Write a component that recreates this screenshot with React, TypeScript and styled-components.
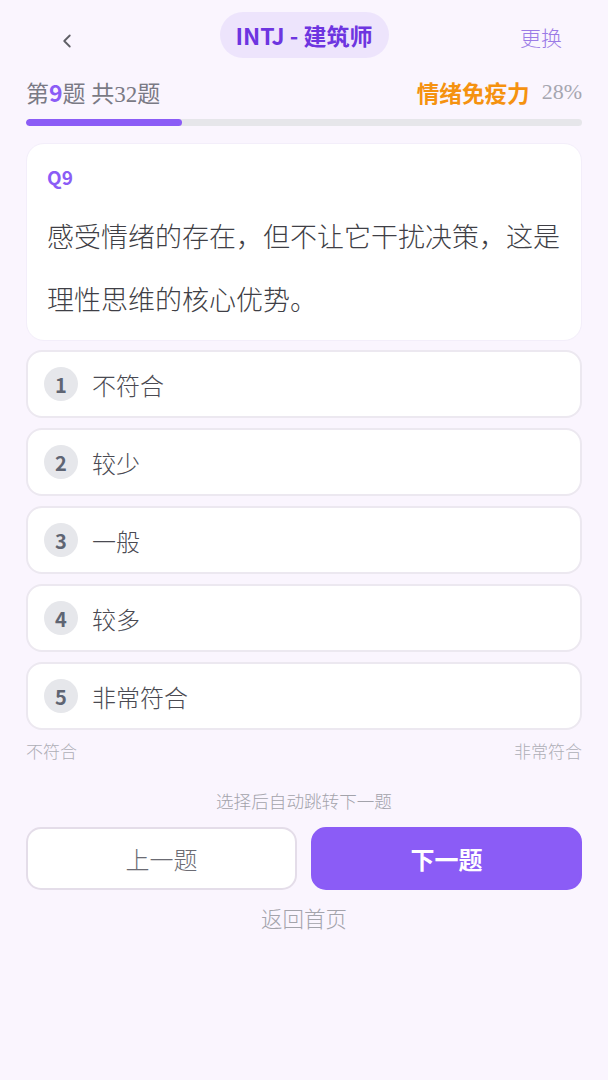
import React from 'react';
import styled, { createGlobalStyle } from 'styled-components';

const GlobalStyle = createGlobalStyle`
    html, body {
        margin: 0;
        padding: 0;
        background: #faf5fe;
    }
    body {
        font-family: 'Liberation Serif', 'Noto Sans CJK SC', serif;
    }
`;

const Page = styled.div`
    width: 608px;
    min-height: 1080px;
    box-sizing: border-box;
    padding: 12px 26px 40px;
    background: #faf5fe;
    display: flex;
    flex-direction: column;
`;

const TopBar = styled.div`
    display: flex;
    align-items: center;
    justify-content: space-between;
    height: 46px;
`;

const BackButton = styled.button`
    width: 80px;
    height: 46px;
    padding: 12px 0 0 30px;
    border: none;
    background: none;
    display: flex;
    align-items: center;
    justify-content: flex-start;
    cursor: pointer;
`;

const TypePill = styled.div`
    height: 46px;
    padding: 0 16px;
    border-radius: 23px;
    background: #ede4fc;
    color: #6d35e0;
    font-family: 'Noto Sans CJK SC', sans-serif;
    font-weight: 700;
    font-size: 23px;
    display: flex;
    align-items: center;
`;

const SwitchLink = styled.div`
    width: 80px;
    text-align: right;
    padding-right: 20px;
    margin-top: 4px;
    box-sizing: border-box;
    color: #9b7be6;
    font-family: 'Noto Sans CJK SC', sans-serif;
    font-weight: 300;
    font-size: 21px;
`;

const MetaRow = styled.div`
    margin-top: 19px;
    display: flex;
    justify-content: space-between;
    align-items: center;
    height: 30px;
`;

const Count = styled.div`
    font-size: 23px;
    color: #7a7a85;
`;

const Current = styled.span`
    font-family: 'Noto Sans CJK SC', sans-serif;
    font-weight: 700;
    color: #8b5cf6;
`;

const Dimension = styled.div`
    display: flex;
    align-items: center;
    gap: 12px;
`;

const DimName = styled.span`
    font-family: 'Noto Sans CJK SC', sans-serif;
    font-weight: 700;
    font-size: 22.6px;
    color: #f59210;
`;

const Percent = styled.span`
    font-size: 22px;
    color: #a6a6b0;
`;

const Track = styled.div`
    margin-top: 12px;
    height: 7px;
    border-radius: 4px;
    background: #e6e6ea;
    overflow: hidden;
`;

const Fill = styled.div`
    height: 100%;
    border-radius: 4px;
    background: #8b5cf6;
`;

const QuestionCard = styled.div`
    margin-top: 17px;
    background: #fff;
    border: 1px solid #f3eefa;
    border-radius: 18px;
    padding: 21px 20px 10px;
`;

const QLabel = styled.div`
    font-family: 'Noto Sans CJK SC', sans-serif;
    font-weight: 700;
    font-size: 19px;
    line-height: 24px;
    color: #8b5cf6;
`;

const QText = styled.div`
    margin-top: 15px;
    font-family: 'Noto Sans CJK SC', sans-serif;
    font-weight: 300;
    font-size: 27px;
    line-height: 63px;
    color: #3f3f46;
`;

const Options = styled.div`
    margin-top: 9px;
    display: flex;
    flex-direction: column;
    gap: 10px;
`;

const Option = styled.button`
    height: 68px;
    box-sizing: border-box;
    background: #fff;
    border: 2px solid #ece8f0;
    border-radius: 16px;
    display: flex;
    align-items: center;
    gap: 14px;
    padding: 0 16px;
    cursor: pointer;
    text-align: left;
`;

const Badge = styled.span`
    width: 34px;
    height: 34px;
    border-radius: 50%;
    background: #e6e7eb;
    color: #5f6573;
    font-family: 'Noto Sans CJK SC', sans-serif;
    font-weight: 700;
    font-size: 20px;
    display: flex;
    align-items: center;
    justify-content: center;
`;

const OptionText = styled.span`
    font-family: 'Noto Sans CJK SC', sans-serif;
    font-weight: 300;
    font-size: 24px;
    color: #4a4a52;
`;

const ScaleRow = styled.div`
    margin-top: 8px;
    display: flex;
    justify-content: space-between;
    font-family: 'Noto Sans CJK SC', sans-serif;
    font-weight: 300;
    font-size: 17px;
    color: #aeaeb6;
`;

const Hint = styled.div`
    margin-top: 25px;
    text-align: center;
    font-family: 'Noto Sans CJK SC', sans-serif;
    font-weight: 300;
    font-size: 17.6px;
    color: #a3a3ab;
`;

const ButtonRow = styled.div`
    margin-top: 14px;
    display: grid;
    grid-template-columns: 1fr 1fr;
    gap: 14px;
`;

const NavButton = styled.button<{ $primary?: boolean }>`
    height: 63px;
    border-radius: 15px;
    border: 2px solid ${p => (p.$primary ? '#8b5cf6' : '#e4dde9')};
    background: ${p => (p.$primary ? '#8b5cf6' : '#fff')};
    color: ${p => (p.$primary ? '#fff' : '#6b6b73')};
    font-family: 'Noto Sans CJK SC', sans-serif;
    font-weight: ${p => (p.$primary ? 700 : 300)};
    font-size: 24px;
    cursor: pointer;
`;

const HomeLink = styled.div`
    margin-top: 12px;
    text-align: center;
    font-family: 'Noto Sans CJK SC', sans-serif;
    font-weight: 300;
    font-size: 21.5px;
    color: #a3a3ab;
`;

const options = ['不符合', '较少', '一般', '较多', '非常符合'];
const progress = 28;

export default function App() {
    return (
        <>
            <GlobalStyle />
            <Page>
                <TopBar>
                    <BackButton aria-label="back">
                        <svg width="22" height="22" viewBox="0 0 24 24" fill="none" stroke="#5f5f66" strokeWidth="2" strokeLinecap="round" strokeLinejoin="round">
                            <path d="M15 18l-6-6 6-6" />
                        </svg>
                    </BackButton>
                    <TypePill>INTJ - 建筑师</TypePill>
                    <SwitchLink>更换</SwitchLink>
                </TopBar>

                <MetaRow>
                    <Count>
                        第<Current>9</Current>题 共32题
                    </Count>
                    <Dimension>
                        <DimName>情绪免疫力</DimName>
                        <Percent>{progress}%</Percent>
                    </Dimension>
                </MetaRow>
                <Track>
                    <Fill style={{ width: `${progress}%` }} />
                </Track>

                <QuestionCard>
                    <QLabel>Q9</QLabel>
                    <QText>感受情绪的存在，但不让它干扰决策，这是理性思维的核心优势。</QText>
                </QuestionCard>

                <Options>
                    {options.map((o, i) => (
                        <Option key={o}>
                            <Badge>{i + 1}</Badge>
                            <OptionText>{o}</OptionText>
                        </Option>
                    ))}
                </Options>

                <ScaleRow>
                    <span>不符合</span>
                    <span>非常符合</span>
                </ScaleRow>

                <Hint>选择后自动跳转下一题</Hint>

                <ButtonRow>
                    <NavButton>上一题</NavButton>
                    <NavButton $primary>下一题</NavButton>
                </ButtonRow>

                <HomeLink>返回首页</HomeLink>
            </Page>
        </>
    );
}
